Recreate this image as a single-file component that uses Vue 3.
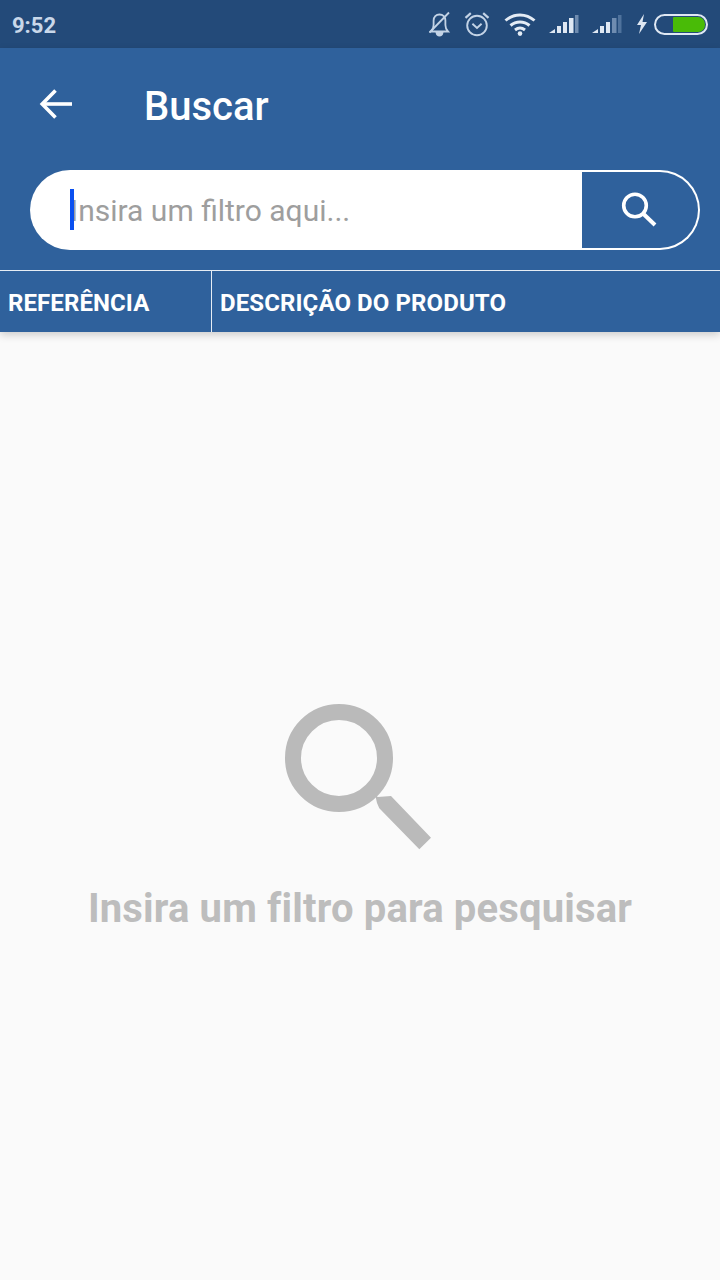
<script setup>
const columns = [
  { key: 'ref', label: 'REFERÊNCIA' },
  { key: 'desc', label: 'DESCRIÇÃO DO PRODUTO' },
]
</script>

<template>
  <div class="screen">
    <div class="status-bar">
      <span class="status-bar__time">9:52</span>
      <div class="status-bar__icons">
        <!-- muted bell -->
        <svg class="ico-bell" width="24" height="26" viewBox="0 0 24 26" fill="none" stroke="#c3d3e6" stroke-width="1.8">
          <path d="M3 20.500h17c-2-2-2.600-3.600-2.600-6.500V9.500c0-3.600-2.400-6-5.900-6s-5.900 2.400-5.900 6V14c0 2.900-.6 4.500-2.600 6.500Z" />
          <path d="M1.500 21.500 21 1.500" />
          <path d="M8.500 21.500c.3 2 1.500 3 3 3s2.700-1 3-3Z" fill="#c3d3e6" />
        </svg>
        <!-- alarm -->
        <svg class="ico-alarm" width="26" height="26" viewBox="0 0 26 26" fill="none" stroke="#c3d3e6" stroke-width="1.9">
          <circle cx="13" cy="14.500" r="9.800" />
          <path d="m8.400 12.800 4.600 4.200 4.600-4.200" />
          <path d="M1.500 6.800 6.800 2.200M24.500 6.800l-5.300-4.600" stroke-width="2.200" />
        </svg>
        <!-- wifi -->
        <svg class="ico-wifi" width="32" height="24" viewBox="0 0 32 24" fill="none" stroke="#e4ecf5" stroke-width="3">
          <path d="M1.500 8.500c8.500-7.500 20.500-7.500 29 0" />
          <path d="M6.500 13.500c5.500-4.800 13.500-4.800 19 0" />
          <path d="M11 18c3-2.400 7-2.400 10 0" />
          <circle cx="16" cy="21.600" r="2.300" fill="#e4ecf5" stroke="none" />
        </svg>
        <!-- signal 1 -->
        <svg class="ico-signal" width="30" height="20" viewBox="0 0 30 20">
          <path d="M0 19 6 15v4Z" fill="#dfe8f3" />
          <rect x="8" y="12" width="4" height="7" fill="#dfe8f3" />
          <rect x="14" y="8" width="4" height="11" fill="#dfe8f3" />
          <rect x="20" y="4" width="4.500" height="15" fill="#dfe8f3" />
          <rect x="26" y="1" width="3.500" height="18" fill="#6f8cb0" />
        </svg>
        <!-- signal 2 -->
        <svg class="ico-signal ico-signal--second" width="30" height="20" viewBox="0 0 30 20">
          <path d="M0 19 6 15v4Z" fill="#dfe8f3" />
          <rect x="8" y="12" width="4" height="7" fill="#dfe8f3" />
          <rect x="14" y="8" width="4" height="11" fill="#dfe8f3" />
          <rect x="20" y="4" width="4.500" height="15" fill="#6f8cb0" />
          <rect x="26" y="1" width="3.500" height="18" fill="#4f729c" />
        </svg>
        <!-- charging bolt -->
        <svg class="ico-bolt" width="12" height="20" viewBox="0 0 12 20">
          <path d="M8 0 1 11h4l-2 9 8-12H6.500Z" fill="#dfe8f3" />
        </svg>
        <!-- battery -->
        <div class="battery"><div class="battery__level"></div></div>
      </div>
    </div>

    <header class="app-bar">
      <div class="app-bar__top">
        <button class="app-bar__back" aria-label="Voltar">
          <svg width="34" height="32" viewBox="0 0 34 32" fill="none" stroke="#fff" stroke-width="3.600">
            <path d="M33 16H4" />
            <path d="M16.500 2.500 3.200 16l13.300 13.500" />
          </svg>
        </button>
        <h1 class="app-bar__title">Buscar</h1>
      </div>

      <div class="search">
        <div class="search__field">
          <span class="search__caret"></span>
          <input class="search__input" type="text" placeholder="Insira um filtro aqui..." />
        </div>
        <button class="search__btn" aria-label="Buscar">
          <svg width="36" height="36" viewBox="0 0 36 36" fill="none" stroke="#fff">
            <circle cx="14" cy="14.500" r="11.300" stroke-width="3.600" />
            <path d="m22 22.500 12 11.500" stroke-width="4" />
          </svg>
        </button>
      </div>

      <div class="table-head">
        <div v-for="col in columns" :key="col.key" class="table-head__cell" :class="`table-head__cell--${col.key}`">
          {{ col.label }}
        </div>
      </div>
    </header>

    <main class="empty">
      <svg class="empty__icon" width="148" height="146" viewBox="0 0 148 146">
        <circle cx="54" cy="54" r="46" fill="none" stroke="#bababa" stroke-width="16" />
        <path d="M90 90 92.700 93 106 92 146 133.700 134.300 145.300 94.300 104.300 92 99Z" fill="#bababa" />
      </svg>
      <p class="empty__text">Insira um filtro para pesquisar</p>
    </main>
  </div>
</template>

<style>
body {
  margin: 0;
  background: #fafafa;
}
</style>

<style scoped>
.screen {
  display: flex;
  flex-direction: column;
  width: 720px;
  height: 1280px;
  overflow: hidden;
  background: #fafafa;
  font-family: Roboto, "Liberation Sans", sans-serif;
}

/* status bar */
.status-bar {
  display: flex;
  align-items: center;
  justify-content: space-between;
  flex-shrink: 0;
  height: 48px;
  padding: 0 12px;
  box-sizing: border-box;
  background: #234a79;
}

.status-bar__time {
  color: #c9d8ea;
  font-size: 22px;
  font-weight: 700;
  margin-top: 2px;
}

.status-bar__icons {
  display: flex;
  align-items: center;
}

.ico-bell { margin-right: 12px; }
.ico-alarm { margin-right: 14px; }
.ico-wifi { margin-right: 13px; }
.ico-signal { margin-right: 13px; }
.ico-signal--second { margin-right: 14px; }
.ico-bolt { margin-right: 6px; }

.battery {
  display: flex;
  justify-content: flex-end;
  width: 54px;
  height: 21px;
  padding: 1px;
  box-sizing: border-box;
  border: 2px solid #dfe8f3;
  border-radius: 11px;
}

.battery__level {
  width: 32px;
  background: #49bb07;
  border-radius: 1px 7px 7px 1px;
}

/* app bar */
.app-bar {
  flex-shrink: 0;
  position: relative;
  background: #2f619c;
  box-shadow: 0 3px 8px rgba(0, 0, 0, 0.18);
}

.app-bar__top {
  display: flex;
  align-items: center;
  height: 122px;
  padding-left: 39px;
  box-sizing: border-box;
}

.app-bar__back {
  display: flex;
  width: 105px;
  padding: 0;
  margin-bottom: 10px;
  background: none;
  border: none;
}

.app-bar__title {
  margin: 0 0 4px;
  color: #fff;
  font-size: 40px;
  font-weight: 500;
  line-height: 48px;
}

/* search */
.search {
  display: flex;
  height: 80px;
  margin: 0 20px 20px 30px;
}

.search__field {
  position: relative;
  flex: 1;
  display: flex;
  background: #fff;
  border-radius: 40px 0 0 40px;
}

.search__caret {
  position: absolute;
  left: 40px;
  top: 19px;
  width: 4px;
  height: 41px;
  background: #0a50f0;
}

.search__input {
  flex: 1;
  min-width: 0;
  padding: 0 0 0 40px;
  background: none;
  border: none;
  outline: none;
  font-family: inherit;
  font-size: 30px;
  color: #333;
}

.search__input::placeholder {
  color: #9e9e9e;
  opacity: 1;
}

.search__btn {
  display: flex;
  align-items: center;
  justify-content: center;
  width: 118px;
  padding: 0 2px 2px 0;
  box-sizing: border-box;
  background: none;
  border: 2px solid #fff;
  border-left: none;
  border-radius: 0 40px 40px 0;
}

/* table head */
.table-head {
  display: flex;
  height: 62px;
  padding-top: 2px;
  border-top: 1px solid #e6edf5;
  box-sizing: border-box;
}

.table-head__cell {
  display: flex;
  align-items: center;
  padding-left: 8px;
  color: #fff;
  font-size: 24px;
  font-weight: 700;
  letter-spacing: 0.1px;
}

.table-head__cell--ref {
  width: 212px;
  margin-top: -2px;
  padding-top: 2px;
  box-sizing: border-box;
  border-right: 1px solid #e6edf5;
}

/* empty state */
.empty {
  flex: 1;
  display: flex;
  flex-direction: column;
  align-items: center;
  padding-top: 372px;
}

.empty__icon {
  margin-right: 2px;
}

.empty__text {
  margin: 35px 0 0;
  color: #bdbdbd;
  font-size: 40px;
  font-weight: 700;
  line-height: 48px;
  letter-spacing: 0.16px;
}
</style>
